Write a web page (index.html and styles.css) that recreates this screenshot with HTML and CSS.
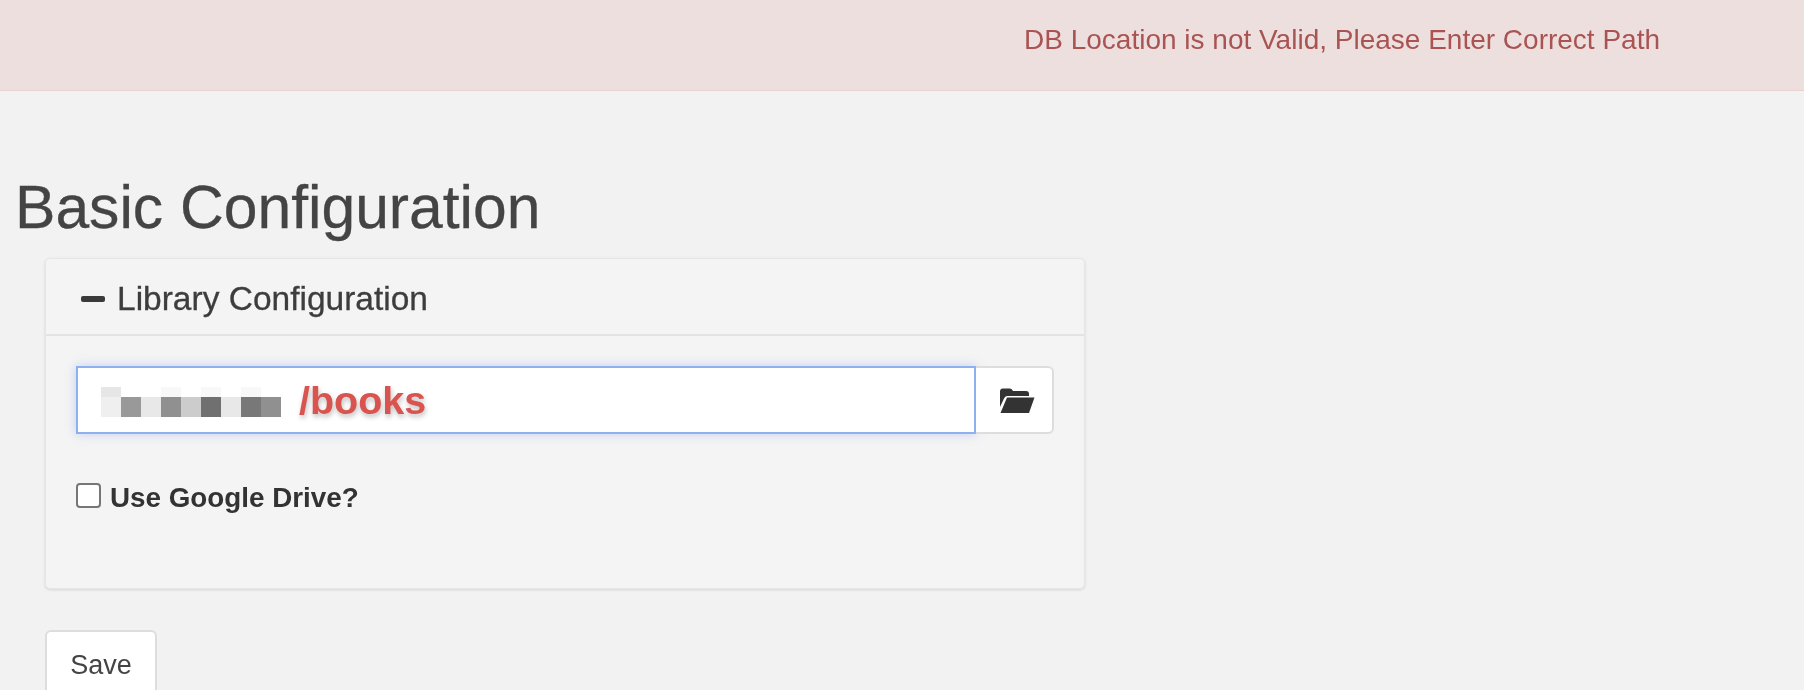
FILE: index.html
```html
<!DOCTYPE html>
<html lang="en">
  <head>
    <meta charset="UTF-8" />
    <title>Basic Configuration</title>
    <link rel="stylesheet" href="styles.css">
  </head>
  <body>
    <div class="alert">DB Location is not Valid, Please Enter Correct Path</div>
    <h1 class="title">Basic Configuration</h1>
    <div class="panel">
      <div class="panel-head">
        <span class="minus"></span>
        <span class="panel-title">Library Configuration</span>
      </div>
      <div class="panel-body">
        <div class="path-group">
          <div class="path-input">
            <!-- blurred part of the path -->
            <div class="mosaic">
              <i class="c1"></i><i></i><i></i><i class="c2"></i><i></i><i class="c2"></i><i></i><i class="c2"></i><i></i>
              <i class="c3"></i><i class="c4"></i><i class="c5"></i><i class="c6"></i><i class="c7"></i><i class="c8"></i><i class="c5"></i><i class="c9"></i><i class="c6"></i>
            </div>
            <span class="path-text">/books</span>
          </div>
          <button class="folder-btn">
            <svg width="36" height="27" viewBox="0 0 36 27">
              <path d="M1 4.5 Q1 1.5 4 1.5 H11 Q13 1.5 14 4 H27 Q30 4 30 7 V9 H8 Q6 9 5 11.5 L1 20 Z" fill="#333"/>
              <path d="M8 10.5 H35.5 L30 26 H1.5 Z" fill="#333"/>
            </svg>
          </button>
        </div>
        <label class="check-row">
          <input type="checkbox" class="check" />
          <span>Use Google Drive?</span>
        </label>
      </div>
    </div>
    <button class="save">Save</button>
  </body>
</html>
```

FILE: styles.css
```css
html,
body {
  height: 690px;
  overflow: hidden;
}
body {
  margin: 0;
  background-color: #f2f2f2;
  color: #333;
  font-family: "Liberation Sans", Arial, sans-serif;
  filter: blur(0.5px);
}
.alert {
  height: 91px;
  padding: 25px 0 0 1024px;
  box-sizing: border-box;
  background-color: #eedfdf;
  border-bottom: 1px solid #e8d3d3;
  color: #a95452;
  font-size: 28px;
  line-height: 30px;
}
.title {
  margin: 83px 0 0 15px;
  font-size: 60.6px;
  line-height: 66px;
  font-weight: 400;
  color: #444;
  -webkit-text-stroke: 0.3px #444;
}
.panel {
  width: 1040px;
  height: 331px;
  margin: 18px 0 0 45px;
  box-sizing: border-box;
  background-color: #f4f4f4;
  border: 1px solid #e6e6e6;
  border-radius: 5px;
  box-shadow: 0 1px 3px rgba(0, 0, 0, 0.12);
}
.panel-head {
  display: flex;
  align-items: center;
  gap: 12px;
  height: 77px;
  padding: 4px 0 0 35px;
  box-sizing: border-box;
  border-bottom: 2px solid #e3e3e3;
  color: #3d3d3d;
}
.panel-title {
  font-size: 33.5px;
  -webkit-text-stroke: 0.3px #3d3d3d;
}
.minus {
  width: 24px;
  height: 6px;
  border-radius: 2px;
  background-color: #3a3a3a;
}
.panel-body {
  padding: 30px 30px 0 30px;
}
.path-group {
  display: flex;
  height: 68px;
}
.path-input {
  display: flex;
  align-items: center;
  gap: 18px;
  width: 900px;
  padding-left: 23px;
  box-sizing: border-box;
  background-color: #fff;
  border: 2px solid #8fb0ee;
  box-shadow: 0 0 10px rgba(102, 140, 233, 0.35);
}
.mosaic {
  display: grid;
  grid-template-columns: repeat(9, 20px);
  grid-template-rows: 10px 20px;
  margin-top: 4px;
}
.c1 { background-color: #e6e6e6; }
.c2 { background-color: #f8f8f8; }
.c3 { background-color: #efefef; }
.c4 { background-color: #999; }
.c5 { background-color: #e8e8e8; }
.c6 { background-color: #909090; }
.c7 { background-color: #ccc; }
.c8 { background-color: #707070; }
.c9 { background-color: #787878; }
.path-text {
  font-size: 39.5px;
  font-weight: 700;
  color: #d9534f;
  text-shadow: 1px 3px 5px rgba(0, 0, 0, 0.25);
}
.folder-btn {
  display: flex;
  align-items: center;
  justify-content: center;
  width: 78px;
  padding: 0 0 0 5px;
  background-color: #fff;
  border: 2px solid #ddd;
  border-left: 0;
  border-radius: 0 6px 6px 0;
}
.check-row {
  display: flex;
  align-items: center;
  gap: 9px;
  margin-top: 48px;
  font-size: 27.8px;
  font-weight: 700;
  color: #333;
}
.check {
  appearance: none;
  width: 25px;
  height: 25px;
  margin: 0 0 6px 0;
  background-color: #fff;
  border: 2px solid #767676;
  border-radius: 4px;
}
.save {
  display: block;
  width: 112px;
  height: 70px;
  margin: 41px 0 0 45px;
  background-color: #fff;
  border: 2px solid #ddd;
  border-radius: 6px;
  color: #444;
  font-family: "Liberation Sans", Arial, sans-serif;
  font-size: 27px;
}
```
